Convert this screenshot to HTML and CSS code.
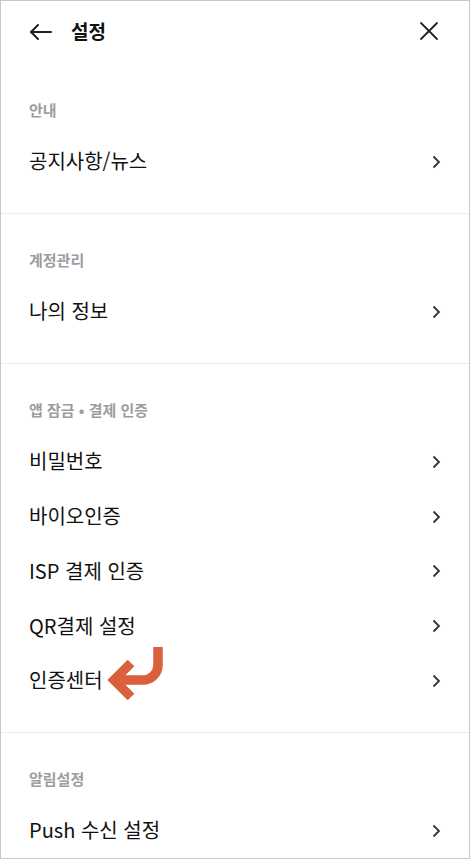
FILE: index.html
```html
<!DOCTYPE html>
<html lang="ko">
<head>
<meta charset="utf-8">
<title>설정</title>
<link rel="stylesheet" href="styles.css">
</head>
<body>
<div class="frame">
  <header class="header">
    <svg class="icon-back" width="24" height="24" viewBox="0 0 24 24" fill="none" stroke="#222" stroke-width="2" stroke-linecap="round" stroke-linejoin="round">
      <path d="M22 12H2"/><path d="M9 5L2 12L9 19"/>
    </svg>
    <h1 class="title">설정</h1>
    <svg class="icon-close" width="20" height="20" viewBox="0 0 20 20" fill="none" stroke="#222" stroke-width="1.8" stroke-linecap="round">
      <path d="M2 2L18 18"/><path d="M18 2L2 18"/>
    </svg>
  </header>

  <section class="section">
    <div class="label">안내</div>
    <div class="item"><span>공지사항/뉴스</span><svg class="chev" width="9" height="14" viewBox="0 0 9 14" fill="none" stroke="#333" stroke-width="1.8"><path d="M1.5 1.5L7 7L1.5 12.5"/></svg></div>
  </section>

  <section class="section">
    <div class="label">계정관리</div>
    <div class="item"><span>나의 정보</span><svg class="chev" width="9" height="14" viewBox="0 0 9 14" fill="none" stroke="#333" stroke-width="1.8"><path d="M1.5 1.5L7 7L1.5 12.5"/></svg></div>
  </section>

  <section class="section">
    <div class="label">앱 잠금 • 결제 인증</div>
    <div class="item"><span>비밀번호</span><svg class="chev" width="9" height="14" viewBox="0 0 9 14" fill="none" stroke="#333" stroke-width="1.8"><path d="M1.5 1.5L7 7L1.5 12.5"/></svg></div>
    <div class="item"><span>바이오인증</span><svg class="chev" width="9" height="14" viewBox="0 0 9 14" fill="none" stroke="#333" stroke-width="1.8"><path d="M1.5 1.5L7 7L1.5 12.5"/></svg></div>
    <div class="item"><span>ISP 결제 인증</span><svg class="chev" width="9" height="14" viewBox="0 0 9 14" fill="none" stroke="#333" stroke-width="1.8"><path d="M1.5 1.5L7 7L1.5 12.5"/></svg></div>
    <div class="item"><span>QR결제 설정</span><svg class="chev" width="9" height="14" viewBox="0 0 9 14" fill="none" stroke="#333" stroke-width="1.8"><path d="M1.5 1.5L7 7L1.5 12.5"/></svg></div>
    <div class="item item-marked"><span>인증센터</span>
      <svg class="pointer" width="60" height="60" viewBox="0 0 60 60" fill="none" stroke="#d9603b" stroke-width="9.5">
        <path d="M51 2V20A15 15 0 0 1 36 35H14"/>
        <path d="M24 18L7 35L24 52"/>
      </svg>
      <svg class="chev" width="9" height="14" viewBox="0 0 9 14" fill="none" stroke="#333" stroke-width="1.8"><path d="M1.5 1.5L7 7L1.5 12.5"/></svg></div>
  </section>

  <section class="section">
    <div class="label">알림설정</div>
    <div class="item"><span>Push 수신 설정</span><svg class="chev" width="9" height="14" viewBox="0 0 9 14" fill="none" stroke="#333" stroke-width="1.8"><path d="M1.5 1.5L7 7L1.5 12.5"/></svg></div>
  </section>
</div>
</body>
</html>
```
FILE: styles.css
```css
* { box-sizing: border-box; }
html, body { margin: 0; padding: 0; background: #fff; }
body {
  font-family: "Noto Sans CJK KR", "Noto Sans", sans-serif;
  color: #111;
}
.frame {
  width: 470px;
  height: 859px;
  border: 1px solid #c8c8c8;
  overflow: hidden;
  background: #fff;
}
.header {
  height: 63px;
  display: flex;
  align-items: center;
  padding: 0 29px 4px 28px;
}
.icon-back { display: block; margin-top: 2px; }
.title {
  margin: 0 0 0 18px;
  font-size: 19px;
  font-weight: 700;
  color: #111;
  flex: 1;
  line-height: 24px;
}
.icon-close { display: block; margin-right: 1px; margin-top: 1px; }
.section {
  padding: 36px 0 23.6px;
  border-bottom: 1px solid #ededed;
}
.section:last-child { border-bottom: none; }
.label {
  padding: 0 28px;
  font-size: 15px;
  line-height: 20px;
  font-weight: 700;
  color: #9a9da1;
  margin-bottom: 14.6px;
}
.item {
  position: relative;
  height: 54.75px;
  display: flex;
  align-items: center;
  justify-content: space-between;
  padding: 0 28px 0 28px;
  font-size: 20px;
  color: #111;
}
.item span { margin-top: -2px; }
.chev { display: block; }
.pointer {
  position: absolute;
  left: 106px;
  top: -8px;
}
```
